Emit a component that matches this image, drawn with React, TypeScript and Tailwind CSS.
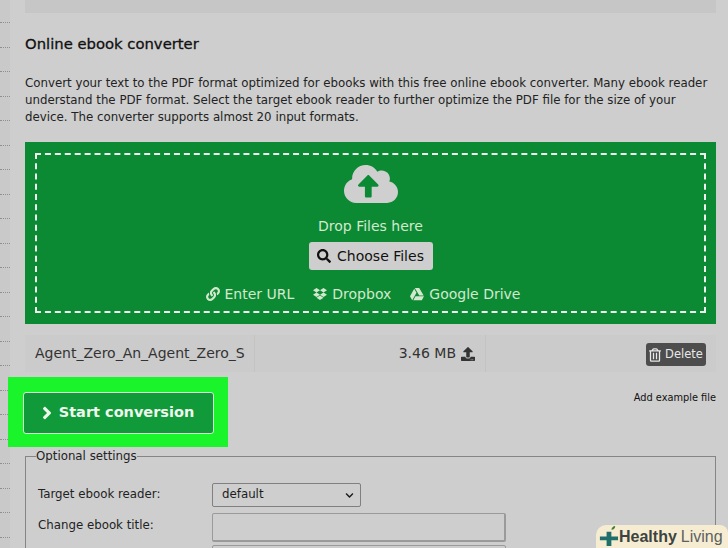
import React from 'react';
import { FaCloudUploadAlt, FaSearch, FaLink, FaDropbox, FaGoogleDrive, FaUpload, FaRegTrashAlt, FaChevronDown, FaAngleRight } from 'react-icons/fa';

const sideLines = Array.from({ length: 22 }, (_, i) => i);

const sources = [
  { label: 'Enter URL', icon: FaLink },
  { label: 'Dropbox', icon: FaDropbox },
  { label: 'Google Drive', icon: FaGoogleDrive },
];

export default function App() {
  return (
    <div className="relative flex w-[728px] h-[548px] overflow-hidden bg-[#cecece] font-['DejaVu_Sans',sans-serif] text-[#1c1c1c]">
      {/* Left page strip */}
      <div className="w-[10px] shrink-0 flex flex-col pt-[22px] gap-[23.5px] bg-[#c9c9c9]">
        {sideLines.map((i) => (
          <div key={i} className="h-px border-t border-dotted border-[#8f8f8f]" />
        ))}
      </div>

      <div className="w-[691px] ml-[15px] shrink-0">
        <div className="h-[13px] bg-[#c6c6c6]" />

        <h2 className="mt-[21px] h-[20px] text-[14.8px] leading-[20px] font-medium text-[#111] whitespace-nowrap [-webkit-text-stroke:0.3px_#111]">
          Online ebook converter
        </h2>

        <p className="mt-[21px] h-[51px] text-[11.8px] leading-[17px] text-[#222] whitespace-nowrap">
          Convert your text to the PDF format optimized for ebooks with this free online ebook converter. Many ebook reader
          <br />
          understand the PDF format. Select the target ebook reader to further optimize the PDF file for the size of your
          <br />
          device. The converter supports almost 20 input formats.
        </p>

        {/* Drop zone */}
        <div className="mt-[16px] h-[182px] bg-[#0b8a33] pt-[11px] pl-[10px] pr-[10px]">
          <div className="h-[160px] border-2 border-dashed border-[#f0f0f0] flex flex-col items-center text-[#d3e8cf]">
            <FaCloudUploadAlt className="mt-[7px] w-[54px] h-[44px] text-[#cfcfcf]" />
            <div className="mt-[10px] h-[20px] text-[14px] leading-[20px]">Drop Files here</div>
            <button className="mt-[6px] h-[28px] w-[124px] flex items-center justify-center gap-[6px] rounded-[3px] bg-[#cecece] text-[14px] text-[#111]">
              <FaSearch className="w-[14px] h-[14px]" />
              Choose Files
            </button>
            <div className="mt-[14px] mr-[15px] flex items-center gap-[19px] text-[14px] leading-[20px]">
              {sources.map((s) => {
                const Icon = s.icon;
                return (
                  <span key={s.label} className="flex items-center gap-[5px]">
                    <Icon className="w-[14px] h-[14px]" />
                    {s.label}
                  </span>
                );
              })}
            </div>
          </div>
        </div>

        {/* File row */}
        <div className="mt-[11px] h-[37px] flex items-center bg-[#cbcbcb] text-[14px] text-[#333]">
          <div className="w-[230px] h-full pl-[10px] flex items-center border-r border-[#c3c3c3] overflow-hidden whitespace-nowrap">
            <span className="w-[210px] shrink-0 overflow-hidden">Agent_Zero_An_Agent_Zero_Story</span>
          </div>
          <div className="w-[231px] h-full pr-[10px] flex items-center justify-end gap-[5px] border-r border-[#c3c3c3]">
            3.46 MB
            <FaUpload className="w-[14px] h-[14px]" />
          </div>
          <div className="flex-1 flex justify-end pr-[10px]">
            <button className="mt-[2px] h-[23px] w-[60px] flex items-center justify-center gap-[4px] rounded-[3px] bg-[#4d4d4d] text-[11.5px] text-[#e8e8e8]">
              <FaRegTrashAlt className="w-[12px] h-[14px]" />
              Delete
            </button>
          </div>
        </div>

        {/* Start button row */}
        <div className="-ml-[17px] mt-[5px] h-[70px] flex justify-between">
          <div className="w-[220px] h-[70px] bg-[#1af52b] pl-[15px] pt-[15px]">
            <button className="w-[191px] h-[42px] pr-[6px] flex items-center justify-center gap-[2px] rounded-[3px] border border-[#d5efd5] bg-[#109a3a] text-[14.5px] font-bold text-[#eef7ee]">
              <FaAngleRight className="w-[20px] h-[20px]" />
              Start conversion
            </button>
          </div>
          <span className="mt-[14px] text-[9.8px] leading-[14px] text-[#111] whitespace-nowrap">Add example file</span>
        </div>

        {/* Optional settings */}
        <fieldset className="mt-[1px] border border-[#858585] pl-[12px] pr-[10px] h-[120px]">
          <legend className="ml-[-2px] px-0 text-[11.8px] leading-[16px] text-[#222]">Optional settings</legend>
          <div className="mt-[19px] flex items-center h-[24px]">
            <label className="w-[174px] text-[11.8px] text-[#222]">Target ebook reader:</label>
            <div className="w-[149px] h-[24px] flex items-center justify-between pl-[9px] pr-[6px] border border-[#808080] rounded-[2px] text-[11.8px]">
              default
              <FaChevronDown className="w-[9px] h-[9px]" />
            </div>
          </div>
          <div className="mt-[6px] flex items-start">
            <label className="w-[174px] text-[11.8px] leading-[24px] text-[#222]">Change ebook title:</label>
            <div className="w-[294px] h-[29px] border border-[#9a9a9a] border-r-2 border-b-2 rounded-[2px]" />
          </div>
          <div className="mt-[3px] ml-[174px] w-[294px] h-[29px] border border-[#9a9a9a] rounded-[2px]" />
        </fieldset>
      </div>

      {/* Watermark */}
      <div className="absolute left-[596px] bottom-0 w-[132px] h-[23px] flex items-center pl-[2px] rounded-tl-[10px] rounded-tr-[8px] bg-[#f6ecd2] text-[16px] leading-[23px] whitespace-nowrap font-['Liberation_Sans',sans-serif]">
        <svg viewBox="0 0 22 22" className="w-[21px] h-[21px] shrink-0 -mt-[3px]">
          <path d="M9 7h5v5h7v4h-7v6H9v-6H2v-4h7z" fill="#1f6f6b" />
          <path d="M14 5c0-2 2-4 4-4 0 2-1 4-4 4z" fill="#3f7f2f" />
        </svg>
        <span className="font-bold text-[#3d4440]">Healthy</span>
        <span className="ml-[4px] text-[#5c615e]">Living</span>
      </div>
    </div>
  );
}
